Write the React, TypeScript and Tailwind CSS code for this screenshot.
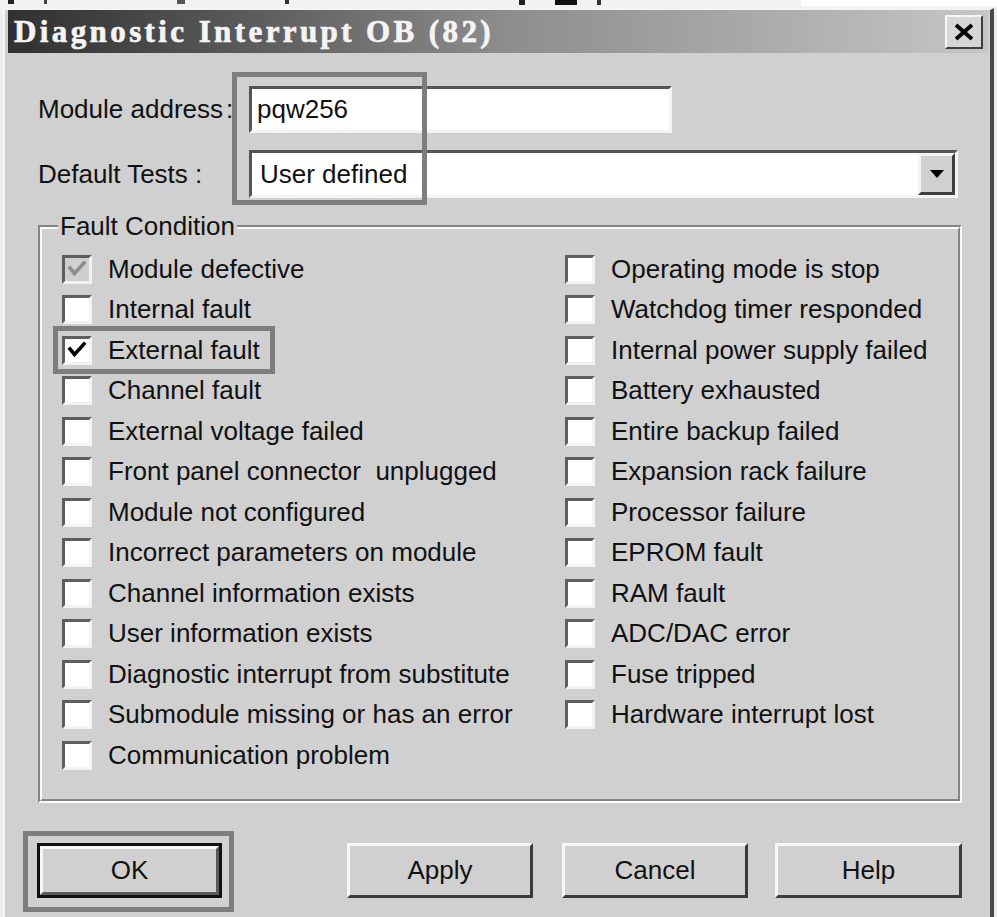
import React from 'react';

const leftItems = [
  'Module defective',
  'Internal fault',
  'External fault',
  'Channel fault',
  'External voltage failed',
  'Front panel connector  unplugged',
  'Module not configured',
  'Incorrect parameters on module',
  'Channel information exists',
  'User information exists',
  'Diagnostic interrupt from substitute',
  'Submodule missing or has an error',
  'Communication problem',
];

const rightItems = [
  'Operating mode is stop',
  'Watchdog timer responded',
  'Internal power supply failed',
  'Battery exhausted',
  'Entire backup failed',
  'Expansion rack failure',
  'Processor failure',
  'EPROM fault',
  'RAM fault',
  'ADC/DAC error',
  'Fuse tripped',
  'Hardware interrupt lost',
];

const CheckBox = ({ checked, disabled }: { checked?: boolean; disabled?: boolean }) => (
  <span
    className={`w-[30px] h-[29px] shrink-0 flex items-center justify-center border-[3px] border-t-[#5e5e5e] border-l-[#5e5e5e] border-b-[#f3f3f3] border-r-[#f3f3f3] ${
      disabled ? 'bg-[#cfcfcf]' : 'bg-white'
    }`}
  >
    {checked && (
      <svg width="20" height="18" viewBox="0 0 20 18">
        <polyline
          points="3,8 7.5,13.5 17,3"
          fill="none"
          stroke={disabled ? '#8c8c8c' : '#000'}
          strokeWidth="3.6"
          strokeLinecap="square"
        />
      </svg>
    )}
  </span>
);

const Row = ({ label, checked, disabled }: { label: string; checked?: boolean; disabled?: boolean }) => (
  <div className="h-[40.5px] flex items-center gap-[16px]">
    <CheckBox checked={checked} disabled={disabled} />
    <span className="whitespace-pre">{label}</span>
  </div>
);

const Btn = ({ label, className = '' }: { label: string; className?: string }) => (
  <div
    className={`h-[55px] flex items-center justify-center bg-[#d0d0d0] border-[3px] border-t-[#f7f7f7] border-l-[#f7f7f7] border-b-[#3a3a3a] border-r-[#3a3a3a] ${className}`}
  >
    {label}
  </div>
);

export default function App() {
  return (
    <div className="w-[997px] h-[917px] overflow-hidden bg-[#eeeeee] text-[#111] text-[26px] font-['Liberation_Sans',Arial,sans-serif]">
      {/* background app strip */}
      <div className="h-[8px] flex items-start bg-[#f2f2f2]">
        <span className="ml-[8px] w-[6px] h-[4px] bg-[#222]" />
        <span className="ml-[30px] w-[3px] h-[4px] bg-[#444]" />
        <span className="ml-[130px] w-[8px] h-[4px] bg-[#555]" />
        <span className="ml-[100px] w-[4px] h-[4px] bg-[#333]" />
        <span className="ml-[230px] w-[6px] h-[5px] bg-[#222]" />
        <span className="ml-[30px] w-[22px] h-[5px] bg-[#111]" />
        <span className="ml-[20px] w-[4px] h-[5px] bg-[#333]" />
        <span className="ml-[200px] flex-1 h-[6px] bg-white" />
      </div>

      {/* dialog */}
      <div className="ml-[3px] w-[991px] h-[909px] bg-[#d0d0d0] border-l-2 border-t-2 border-l-[#f4f4f4] border-t-[#f4f4f4] border-r-4 border-r-[#4a4a4a]">
        {/* title bar */}
        <div className="ml-[3px] mr-[2px] h-[43px] flex items-center pl-[6px] bg-gradient-to-r from-[#303030] via-[#8c8c8c] to-[#c6c6c6]">
          <span className="text-[31px] font-bold text-[#f4f4f4] whitespace-pre tracking-[3.4px] font-['Liberation_Serif',serif] leading-none [-webkit-text-stroke:0.7px_#f4f4f4]">
            Diagnostic Interrupt OB (82)
          </span>
          <div className="ml-auto mr-[5px] w-[38px] h-[34px] flex items-center justify-center bg-[#d6d6d6] border-2 border-t-[#f6f6f6] border-l-[#f6f6f6] border-b-[#3e3e3e] border-r-[#3e3e3e]">
            <svg width="22" height="18" viewBox="0 0 22 18">
              <path d="M3 2 L19 16 M19 2 L3 16" stroke="#000" strokeWidth="3.8" />
            </svg>
          </div>
        </div>

        {/* content */}
        <div className="pl-[33px]">
          <div className="relative">
            <div className="mt-[33px] h-[47px] flex items-center">
              <span className="w-[211px] whitespace-pre">Module address<span className="ml-[3px]">:</span></span>
              <div className="w-[423px] h-[47px] bg-white flex items-center pl-[5px] border-[3px] border-t-[#555] border-l-[#555] border-b-[#f4f4f4] border-r-[#f4f4f4]">
                pqw256
              </div>
            </div>
            <div className="mt-[17px] h-[48px] flex items-center">
              <span className="w-[211px] whitespace-pre">Default Tests :</span>
              <div className="w-[709px] h-[48px] bg-white flex items-center pl-[8px] border-[3px] border-t-[#555] border-l-[#555] border-b-[#f4f4f4] border-r-[#f4f4f4]">
                <span>User defined</span>
                <div className="ml-auto w-[37px] h-[42px] flex items-center justify-center bg-[#d0d0d0] border-[3px] border-t-[#f4f4f4] border-l-[#f4f4f4] border-b-[#3e3e3e] border-r-[#3e3e3e]">
                  <svg width="14" height="8" viewBox="0 0 14 8">
                    <polygon points="0,0 14,0 7,8" fill="#000" />
                  </svg>
                </div>
              </div>
            </div>
            {/* annotation frame */}
            <div className="absolute left-[194px] top-[-14px] w-[195px] h-[133px] border-[5px] border-[#7d7d7d]" />
          </div>

          {/* group box */}
          <div className="mt-[27px] w-[924px] h-[578px] border-2 border-t-[#858585] border-l-[#858585] border-b-[#fafafa] border-r-[#fafafa]">
            <div className="h-full border-2 border-t-[#fafafa] border-l-[#fafafa] border-b-[#858585] border-r-[#858585]">
              <div className="-mt-[19px] ml-[16px] w-fit px-[2px] h-[32px] flex items-center bg-[#d0d0d0]">
                Fault Condition
              </div>
              <div className="mt-[7px] pl-[20px] flex">
                <div className="w-[503px] flex flex-col">
                  {leftItems.map((t, i) => (
                    <div key={t} className={i === 2 ? 'relative' : ''}>
                      <Row label={t} checked={i === 0 || i === 2} disabled={i === 0} />
                      {i === 2 && (
                        <div className="absolute left-[-9px] top-[-4px] w-[222px] h-[48px] border-[5px] border-[#7d7d7d]" />
                      )}
                    </div>
                  ))}
                </div>
                <div className="flex flex-col">
                  {rightItems.map((t) => (
                    <Row key={t} label={t} />
                  ))}
                </div>
              </div>
            </div>
          </div>

          {/* buttons */}
          <div className="mt-[40px] flex">
            <div className="relative">
              <div className="w-[185px] h-[55px] border-[3px] border-[#111] -ml-[1px]">
                <div className="h-full flex items-center justify-center bg-[#d0d0d0] border-[3px] border-t-[#f7f7f7] border-l-[#f7f7f7] border-b-[#5a5a5a] border-r-[#5a5a5a]">
                  OK
                </div>
              </div>
              <div className="absolute left-[-15px] top-[-12px] w-[211px] h-[81px] border-[5px] border-[#7d7d7d]" />
            </div>
            <Btn label="Apply" className="ml-[125px] w-[186px]" />
            <Btn label="Cancel" className="ml-[29px] w-[186px]" />
            <Btn label="Help" className="ml-[27px] w-[187px]" />
          </div>
        </div>
      </div>
    </div>
  );
}
